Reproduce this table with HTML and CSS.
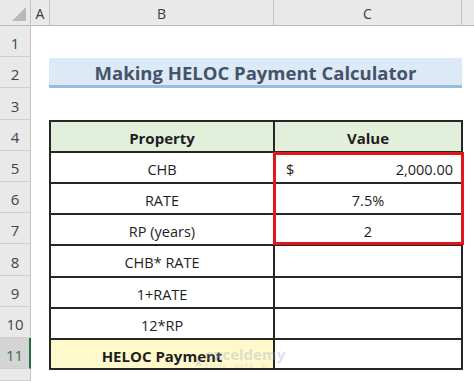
FILE: index.html
```html
<!DOCTYPE html>
<html>
<head>
<meta charset="utf-8">
<link rel="stylesheet" href="styles.css">
</head>
<body>
<div class="sheet">
  <div class="table">
    <div class="cell hdr">Property</div><div class="cell hdr">Value</div>
    <div class="cell">CHB</div><div class="cell money"><span>$</span><span>2,000.00</span></div>
    <div class="cell">RATE</div><div class="cell">7.5%</div>
    <div class="cell">RP (years)</div><div class="cell">2</div>
    <div class="cell">CHB* RATE</div><div class="cell"></div>
    <div class="cell">1+RATE</div><div class="cell"></div>
    <div class="cell">12*RP</div><div class="cell"></div>
    <div class="cell heloc">HELOC Payment</div><div class="cell"></div>
    <span class="redbox"></span>
    <span class="wm"><span class="wm-ico">x</span><span class="wm-txt">exceldemy<small>EXCEL · DATA · BI</small></span></span>
  </div>

  <div class="corner"><span class="tri"></span></div>
  <div class="ch">A</div>
  <div class="ch">B</div>
  <div class="ch">C</div>
  <div class="ch last"></div>

  <div class="rh">1</div><div class="c"></div><div class="c"></div><div class="c"></div><div class="c"></div>
  <div class="rh">2</div><div class="c"></div><div class="title">Making HELOC Payment Calculator</div><div class="c"></div>
  <div class="rh">3</div><div class="c"></div><div class="c"></div><div class="c"></div><div class="c"></div>
  <div class="rh">4</div><div class="c"></div><div class="c"></div>
  <div class="rh">5</div><div class="c"></div><div class="c"></div>
  <div class="rh">6</div><div class="c"></div><div class="c"></div>
  <div class="rh">7</div><div class="c"></div><div class="c"></div>
  <div class="rh">8</div><div class="c"></div><div class="c"></div>
  <div class="rh">9</div><div class="c"></div><div class="c"></div>
  <div class="rh">10</div><div class="c"></div><div class="c"></div>
  <div class="rh sel">11</div><div class="c"></div><div class="c"></div>
  <div class="rh"></div><div class="c"></div><div class="c"></div><div class="c"></div><div class="c"></div>
</div>
</body>
</html>
```

FILE: styles.css
```css
html, body {
  margin: 0;
  padding: 0;
  background: #ffffff;
}

body {
  font-family: "Open Sans", "Liberation Sans", sans-serif;
  color: #1e1e1e;
  overflow: hidden;
}

.sheet {
  display: grid;
  grid-template-columns: 31px 19px 224px 188px 12px;
  grid-template-rows: 26px 31px 31px 32px 31px 31px 31px 31px 32px 31px 31px 31px 12px;
  width: 474px;
  height: 381px;
}

.sheet > div {
  box-sizing: border-box;
  min-width: 0;
}

.corner {
  background: #e9e9e9;
  border-right: 1px solid #c4c4c4;
  border-bottom: 1px solid #b8b8b8;
  position: relative;
}

.tri {
  position: absolute;
  right: 4px;
  bottom: 4px;
  width: 0;
  height: 0;
  border-left: 14px solid transparent;
  border-bottom: 14px solid #b9b9b9;
}

.ch {
  background: #e9e9e9;
  border-right: 1px solid #c4c4c4;
  border-bottom: 1px solid #b8b8b8;
  display: flex;
  align-items: center;
  justify-content: center;
  font-size: 14px;
  color: #3a3a3a;
  padding-top: 1px;
}

.ch.last {
  border-right: none;
}

.rh {
  background: #e9e9e9;
  border-right: 1px solid #c4c4c4;
  border-bottom: 1px solid #cfcfcf;
  display: flex;
  align-items: center;
  justify-content: center;
  font-size: 15px;
  color: #444444;
  padding-top: 4px;
}

.rh.sel {
  background: #d4d4d4;
  border-right: 2px solid #217346;
  color: #3d6b52;
}

.title {
  grid-column: span 2;
  background: #dce9f6;
  border-bottom: 3px solid #9dbbe0;
  margin-top: 1px;
  margin-left: -1px;
  display: flex;
  align-items: center;
  justify-content: center;
  font-size: 18.5px;
  font-weight: 700;
  color: #44546a;
  padding-top: 2px;
}

.sheet > .table {
  grid-column: 3 / 5;
  grid-row: 5 / 13;
  justify-self: start;
  align-self: start;
  width: 414px;
  height: 250px;
  margin-left: -1px;
  position: relative;
  display: grid;
  grid-template-columns: 222px 186px;
  grid-template-rows: 29px 29px 29px 29px 30px 29px 29px 28px;
  gap: 2px;
  padding: 2px;
  background: #262626;
}

.cell {
  background: #ffffff;
  display: flex;
  align-items: center;
  justify-content: center;
  font-size: 14.5px;
  color: #1e1e1e;
  padding-top: 3px;
  box-sizing: border-box;
}

.cell.hdr {
  background: #e2efda;
  font-weight: 700;
  font-size: 15px;
}

.cell.money {
  justify-content: space-between;
  padding-left: 11px;
  padding-right: 8px;
}

.cell.heloc {
  background: #fff9cc;
  font-weight: 700;
  font-size: 15px;
}

.redbox {
  position: absolute;
  left: 224px;
  top: 32px;
  width: 191px;
  height: 93px;
  box-sizing: border-box;
  border: 3px solid #e3161e;
}

.wm {
  position: absolute;
  left: 146px;
  top: 226px;
  display: flex;
  align-items: flex-start;
  gap: 3px;
  opacity: 0.3;
  pointer-events: none;
}

.wm-ico {
  font-size: 12px;
  font-weight: 700;
  color: #7f95b2;
  line-height: 16px;
  margin-top: 8px;
}

.wm-txt {
  display: flex;
  flex-direction: column;
  font-size: 15px;
  font-weight: 700;
  color: #8fa3bf;
  line-height: 17px;
}

.wm-txt small {
  font-size: 6px;
  font-weight: 400;
  letter-spacing: 1px;
  line-height: 7px;
}
```
